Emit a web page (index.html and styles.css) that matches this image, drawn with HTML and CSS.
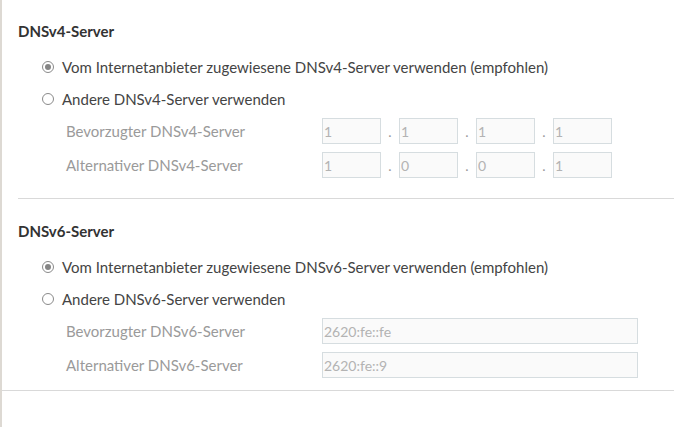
FILE: index.html
```html
<!DOCTYPE html>
<html lang="de">
<head>
<meta charset="utf-8">
<title>DNS-Server</title>
<link rel="stylesheet" href="styles.css">
</head>
<body>
<div class="frame">
  <section class="group group-v4">
    <h3 class="group-title">DNSv4-Server</h3>
    <label class="radio"><span class="radio-dot checked"></span>Vom Internetanbieter zugewiesene DNSv4-Server verwenden (empfohlen)</label>
    <label class="radio"><span class="radio-dot"></span>Andere DNSv4-Server verwenden</label>
    <div class="field">
      <span class="field-label">Bevorzugter DNSv4-Server</span>
      <div class="ip">
        <input class="octet" value="1" disabled><span class="sep">.</span><input class="octet" value="1" disabled><span class="sep">.</span><input class="octet" value="1" disabled><span class="sep">.</span><input class="octet" value="1" disabled>
      </div>
    </div>
    <div class="field">
      <span class="field-label">Alternativer DNSv4-Server</span>
      <div class="ip">
        <input class="octet" value="1" disabled><span class="sep">.</span><input class="octet" value="0" disabled><span class="sep">.</span><input class="octet" value="0" disabled><span class="sep">.</span><input class="octet" value="1" disabled>
      </div>
    </div>
  </section>
  <section class="group group-v6">
    <h3 class="group-title">DNSv6-Server</h3>
    <label class="radio"><span class="radio-dot checked"></span>Vom Internetanbieter zugewiesene DNSv6-Server verwenden (empfohlen)</label>
    <label class="radio"><span class="radio-dot"></span>Andere DNSv6-Server verwenden</label>
    <div class="field">
      <span class="field-label">Bevorzugter DNSv6-Server</span>
      <input class="wide" value="2620:fe::fe" disabled>
    </div>
    <div class="field">
      <span class="field-label">Alternativer DNSv6-Server</span>
      <input class="wide" value="2620:fe::9" disabled>
    </div>
  </section>
</div>
</body>
</html>
```

FILE: styles.css
```css
html, body {
  margin: 0;
  padding: 0;
  background: #ffffff;
}

body {
  font-family: Lato, "Noto Sans", sans-serif;
  font-size: 15px;
  color: #444444;
}

.frame {
  height: 427px;
  border-left: 2px solid #ddd9d3;
  box-sizing: border-box;
}

.group {
  display: flex;
  flex-direction: column;
  border-bottom: 1px solid #d9d9d9;
}

.group-v4 {
  margin-left: 16px;
  padding: 21px 0 20px 0;
}

.group-v6 {
  padding: 22px 0 12px 16px;
}

.group-title {
  margin: 0 0 10px 0;
  font-size: 15px;
  line-height: 20px;
  font-weight: 700;
  color: #333333;
}

.radio {
  display: flex;
  align-items: center;
  gap: 8px;
  height: 32px;
  padding-left: 24px;
  color: #444444;
}

.radio-dot {
  width: 12px;
  height: 12px;
  box-sizing: border-box;
  border: 1px solid #8a8a8a;
  border-radius: 50%;
  display: flex;
  align-items: center;
  justify-content: center;
  background: #fff;
}

.radio-dot.checked::after {
  content: "";
  width: 6px;
  height: 6px;
  border-radius: 50%;
  background: #858585;
}

.field {
  display: flex;
  align-items: center;
  height: 26px;
  margin-top: 8px;
}

.radio + .field {
  margin-top: 3px;
}

.field-label {
  flex: 0 0 304px;
  padding-left: 48px;
  box-sizing: border-box;
  color: #9a9a9a;
}

.ip {
  display: flex;
  align-items: center;
}

.sep {
  width: 18px;
  text-align: center;
  color: #9a9a9a;
  font-size: 14px;
}

input {
  font-family: inherit;
  font-size: 14px;
  height: 26px;
  box-sizing: border-box;
  border: 1px solid #d6dde0;
  background: #fafafa;
  color: #b3b3b3;
  padding: 0 1px;
  margin: 0;
  outline: none;
}

input:disabled {
  color: #b3b3b3;
  -webkit-text-fill-color: #b3b3b3;
  opacity: 1;
}

.octet {
  width: 59px;
}

.wide {
  width: 316px;
}
```
